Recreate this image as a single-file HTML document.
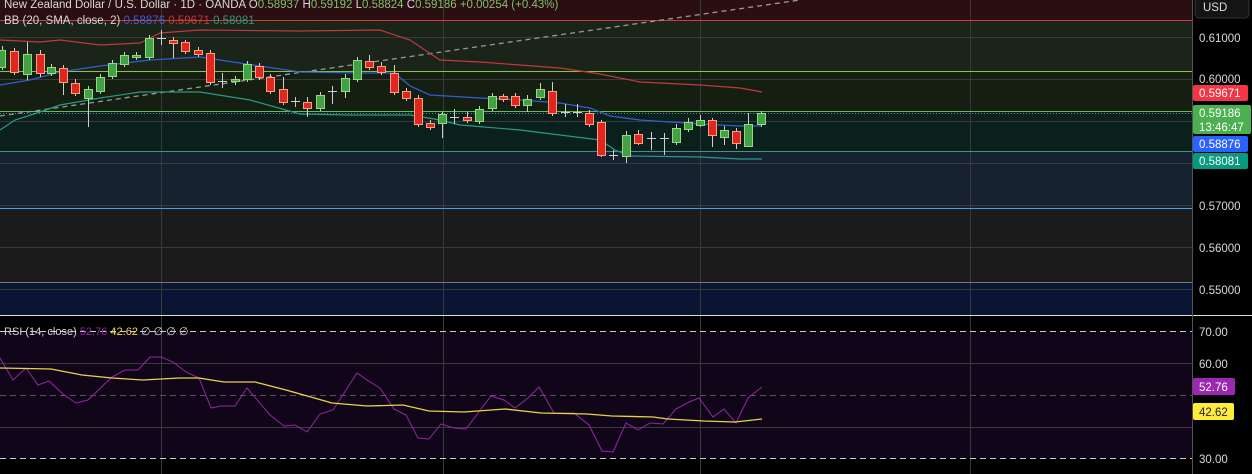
<!DOCTYPE html>
<html><head><meta charset="utf-8"><style>
html,body{margin:0;padding:0;background:#000;width:1252px;height:474px;overflow:hidden}
svg{display:block}
text{font-family:"Liberation Sans",sans-serif}
</style></head><body>
<svg width="1252" height="474" viewBox="0 0 1252 474" xmlns="http://www.w3.org/2000/svg">
<!-- background bands -->
<rect x="0" y="0" width="1192" height="20" fill="#2a0e12"/>
<rect x="0" y="20" width="1192" height="51" fill="#1a2419"/>
<rect x="0" y="71" width="1192" height="40" fill="#141f12"/>
<rect x="0" y="111" width="1192" height="40" fill="#0b1f1c"/>
<rect x="0" y="151" width="1192" height="58" fill="#16222f"/>
<rect x="0" y="209" width="1192" height="73" fill="#1b1b1b"/>
<rect x="0" y="282" width="1192" height="33" fill="#0a1433"/>
<rect x="0" y="315" width="1192" height="159" fill="#000"/>
<rect x="0" y="332" width="1192" height="126" fill="#110619"/>
<!-- grid -->
<g stroke="#3a3a3a" stroke-width="1">
<line x1="0" y1="37.5" x2="1192" y2="37.5"/>
<line x1="0" y1="79.5" x2="1192" y2="79.5"/>
<line x1="0" y1="121.5" x2="1192" y2="121.5"/>
<line x1="0" y1="163.5" x2="1192" y2="163.5"/>
<line x1="0" y1="205.5" x2="1192" y2="205.5"/>
<line x1="0" y1="247.5" x2="1192" y2="247.5"/>
<line x1="0" y1="289.5" x2="1192" y2="289.5"/>
<line x1="0" y1="363.5" x2="1192" y2="363.5"/>
<line x1="0" y1="427.5" x2="1192" y2="427.5"/>
<line x1="161.5" y1="0" x2="161.5" y2="474"/>
<line x1="443.5" y1="0" x2="443.5" y2="474"/>
<line x1="700.5" y1="0" x2="700.5" y2="474"/>
<line x1="970.5" y1="0" x2="970.5" y2="474"/>
</g>
<g stroke="#cccccc" stroke-dasharray="6,4" stroke-width="1">
<line x1="0" y1="331.5" x2="1192" y2="331.5"/>
<line x1="0" y1="458.5" x2="1192" y2="458.5"/>
</g>
<line x1="0" y1="395.5" x2="1192" y2="395.5" stroke="#555" stroke-dasharray="6,4"/>
<!-- horizontal levels -->
<line x1="0" y1="20.5" x2="1192" y2="20.5" stroke="#d23a3a"/>
<line x1="0" y1="71.5" x2="1192" y2="71.5" stroke="#8bc34a"/>
<line x1="0" y1="111.5" x2="1192" y2="111.5" stroke="#66bb6a"/>
<line x1="0" y1="113.5" x2="1192" y2="113.5" stroke="#66bb6a" stroke-dasharray="1,2" opacity=".8"/>
<line x1="0" y1="151.5" x2="1192" y2="151.5" stroke="#3a9a80"/>
<line x1="0" y1="208.5" x2="1192" y2="208.5" stroke="#4a9fe0"/>
<line x1="0" y1="282.5" x2="1192" y2="282.5" stroke="#777"/>
<line x1="0" y1="315.5" x2="1252" y2="315.5" stroke="#ddd"/>
<line x1="1192.5" y1="0" x2="1192.5" y2="474" stroke="#555"/>
<!-- trend dashed -->
<line x1="0" y1="116" x2="800" y2="0" stroke="#999" stroke-dasharray="5,4" stroke-width="1.3"/>
<!-- BB -->
<polyline fill="none" stroke="#c0393f" stroke-width="1.2" points="0,40 40,42 60,40 100,45 140,43 160,33 200,30 300,31 380,30 410,40 440,60 480,62 520,65 560,68 600,74 640,82 700,85 740,88 762,92"/>
<polyline fill="none" stroke="#2f5fd0" stroke-width="1.3" points="0,85 30,80 60,72 100,66 150,60 200,57 240,63 300,72 360,73 395,73 410,86 430,95 480,98 520,100 560,103 590,108 610,116 640,120 700,124 740,126 762,126"/>
<polyline fill="none" stroke="#2a9a80" stroke-width="1.2" points="0,130 15,120 40,112 60,105 100,98 140,92 200,92 250,100 300,114 350,115 410,115 440,120 460,125 520,130 560,135 600,140 615,150 630,156 700,157 740,159 762,159"/>
<!-- candles -->
<g id="c" stroke-width="1">
<!-- wicks -->
<g stroke="#cfcfcf">
<path d="M2.5 46V70M14.5 48V75M27.5 42V80M40.5 50V77M51.5 64V76M63.5 65V95M75.5 79V96M88.5 86V127M100.5 74V94M112.5 60V79M124.5 52V67M136.5 52V60M149.5 35V60M161.5 30V45M173.5 37V58M185.5 40V54M198.5 47V57M210.5 50V85M222.5 73V88M235.5 76V85M247.5 61V82M259.5 63V80M270.5 74V94M283.5 77V105M295.5 97V107M307.5 97V117M320.5 92V111M332.5 86V104M345.5 74V98M357.5 57V82M369.5 55V70M381.5 62V75M394.5 65V95M406.5 88V101M418.5 95V127M430.5 120V130M442.5 112V138M454.5 109V124M467.5 112V123M479.5 106V124M492.5 93V111M503.5 94V102M515.5 93V108M527.5 95V112M540.5 83V100M552.5 82V116M565.5 104V117M577.5 104V117M589.5 110V127M601.5 120V157M613.5 150V160M626.5 131V163M638.5 130V145M651.5 132V150M664.5 133V155M676.5 124V145M688.5 118V132M700.5 115V127M712.5 118V147M724.5 126V145M736.5 128V149M748.5 113V147M761.5 111V127"/>
</g>
<g fill="#43a047" stroke="#8fdc7a">
<rect x="-2.5" y="50.5" width="8" height="17"/>
<rect x="23.5" y="54.5" width="8" height="20"/>
<rect x="47.5" y="67.5" width="8" height="6"/>
<rect x="84.5" y="89.5" width="8" height="9"/>
<rect x="96.5" y="77.5" width="8" height="14"/>
<rect x="108.5" y="63.5" width="8" height="13"/>
<rect x="120.5" y="55.5" width="8" height="9"/>
<rect x="132.5" y="55.5" width="8" height="2"/>
<rect x="145.5" y="38.5" width="8" height="19"/>
<rect x="231.5" y="79.5" width="8" height="2"/>
<rect x="243.5" y="64.5" width="8" height="15"/>
<rect x="316.5" y="95.5" width="8" height="13"/>
<rect x="341.5" y="78.5" width="8" height="13"/>
<rect x="353.5" y="60.5" width="8" height="19"/>
<rect x="438.5" y="114.5" width="8" height="9"/>
<rect x="475.5" y="109.5" width="8" height="12"/>
<rect x="488.5" y="96.5" width="8" height="12"/>
<rect x="523.5" y="99.5" width="8" height="6"/>
<rect x="536.5" y="89.5" width="8" height="8"/>
<rect x="622.5" y="135.5" width="8" height="21"/>
<rect x="672.5" y="128.5" width="8" height="14"/>
<rect x="684.5" y="122.5" width="8" height="7"/>
<rect x="696.5" y="120.5" width="8" height="5"/>
<rect x="720.5" y="130.5" width="8" height="7"/>
<rect x="744.5" y="124.5" width="8" height="22"/>
<rect x="757.5" y="113.5" width="8" height="11"/>
</g>
<g fill="#e0261e" stroke="#f5a07f">
<rect x="10.5" y="51.5" width="8" height="21"/>
<rect x="36.5" y="54.5" width="8" height="19"/>
<rect x="59.5" y="68.5" width="8" height="14"/>
<rect x="71.5" y="83.5" width="8" height="10"/>
<rect x="169.5" y="40.5" width="8" height="3"/>
<rect x="181.5" y="42.5" width="8" height="9"/>
<rect x="194.5" y="50.5" width="8" height="4"/>
<rect x="206.5" y="53.5" width="8" height="29"/>
<rect x="255.5" y="66.5" width="8" height="11"/>
<rect x="266.5" y="77.5" width="8" height="14"/>
<rect x="279.5" y="89.5" width="8" height="13"/>
<rect x="303.5" y="102.5" width="8" height="6"/>
<rect x="365.5" y="61.5" width="8" height="6"/>
<rect x="377.5" y="66.5" width="8" height="6"/>
<rect x="390.5" y="73.5" width="8" height="19"/>
<rect x="402.5" y="91.5" width="8" height="7"/>
<rect x="414.5" y="98.5" width="8" height="26"/>
<rect x="426.5" y="123.5" width="8" height="4"/>
<rect x="463.5" y="117.5" width="8" height="3"/>
<rect x="499.5" y="96.5" width="8" height="3"/>
<rect x="511.5" y="96.5" width="8" height="9"/>
<rect x="548.5" y="91.5" width="8" height="22"/>
<rect x="585.5" y="113.5" width="8" height="11"/>
<rect x="597.5" y="122.5" width="8" height="33"/>
<rect x="634.5" y="134.5" width="8" height="9"/>
<rect x="708.5" y="120.5" width="8" height="15"/>
<rect x="732.5" y="131.5" width="8" height="12"/>
</g>
<g stroke="#cfcfcf">
<path d="M218 81.5h9M291 101.5h9M328 91.5h9M450 117.5h9M561 112.5h9M573 112.5h9M609 155.5h9M647 138.5h9M660 138.5h9M157 38.5h9"/>
</g>
</g>
<!-- RSI -->
<polyline fill="none" stroke="#8e2a9e" stroke-width="1" points="0,358 13,380 26,368 38,385 49,381 64,395 76,403 88,400 112,377 125,370 138,370 150,357 161,357 173,362 186,372 199,378 211,408 221,406 235,406 247,388 270,415 284,426 295,425 307,432 320,414 333,410 357,373 370,382 380,388 394,409 406,415 418,438 429,439 441,424 454,428 466,429 491,396 504,400 515,408 528,398 539,387 554,413 574,413 589,425 602,451 613,452 626,423 638,430 650,423 663,424 676,409 689,402 699,398 713,417 724,409 736,423 748,398 762,387"/>
<polyline fill="none" stroke="#e8d44a" stroke-width="1.3" points="0,368 51,369 82,375 112,378 143,380 179,378 199,378 224,382 255,382 286,390 332,403 367,406 403,405 429,411 464,412 505,409 541,413 587,414 612,416 653,417 668,419 704,421 735,422 762,419"/>
<!-- header text -->
<text x="4" y="8" font-size="11.5" fill="#d8d8d8">New Zealand Dollar / U.S. Dollar · 1D · OANDA <tspan fill="#d8d8d8"> O</tspan><tspan fill="#7cc46a">0.58937</tspan><tspan> H</tspan><tspan fill="#7cc46a">0.59192</tspan><tspan> L</tspan><tspan fill="#7cc46a">0.58824</tspan><tspan> C</tspan><tspan fill="#7cc46a">0.59186 +0.00254 (+0.43%)</tspan></text>
<text x="4" y="24" font-size="11.5" fill="#d8d8d8">BB (20, SMA, close, 2) <tspan fill="#3d5fd8">0.58876</tspan> <tspan fill="#c0393f">0.59671</tspan> <tspan fill="#2a9a80">0.58081</tspan></text>
<text x="4" y="335" font-size="11" fill="#d8d8d8">RSI (14, close) <tspan fill="#8e2a9e">52.76</tspan> <tspan fill="#f0dc4a">42.62</tspan>  ∅  ∅  ∅  ∅</text>
<!-- axis -->
<rect x="1195" y="-4" width="54" height="22" rx="4" fill="#141414" stroke="#333"/>
<text x="1203" y="11" font-size="11.5" fill="#ddd">USD</text>
<g font-size="11.5" fill="#d8d8d8">
<text x="1199" y="42">0.61000</text>
<text x="1199" y="83">0.60000</text>
<text x="1199" y="210">0.57000</text>
<text x="1199" y="252">0.56000</text>
<text x="1199" y="294">0.55000</text>
<text x="1199" y="336">70.00</text>
<text x="1199" y="368">60.00</text>
<text x="1199" y="463">30.00</text>
</g>
<rect x="1193" y="85" width="55" height="16" rx="2" fill="#f23645"/>
<text x="1199" y="97" font-size="11.5" fill="#fff">0.59671</text>
<rect x="1193" y="105" width="58" height="29" rx="2" fill="#4caf50"/>
<text x="1199" y="117" font-size="11.5" fill="#fff">0.59186</text>
<text x="1199" y="131" font-size="11.5" fill="#fff">13:46:47</text>
<rect x="1193" y="136" width="55" height="16" rx="2" fill="#2962ff"/>
<text x="1199" y="148" font-size="11.5" fill="#fff">0.58876</text>
<rect x="1193" y="153" width="55" height="16" rx="2" fill="#089981"/>
<text x="1199" y="165" font-size="11.5" fill="#fff">0.58081</text>
<rect x="1193" y="378" width="42" height="17" rx="2" fill="#9c27b0"/>
<text x="1199" y="391" font-size="11.5" fill="#fff">52.76</text>
<rect x="1193" y="403" width="41" height="17" rx="2" fill="#ffeb3b"/>
<text x="1199" y="416" font-size="11.5" fill="#222">42.62</text>
</svg>
</body></html>
